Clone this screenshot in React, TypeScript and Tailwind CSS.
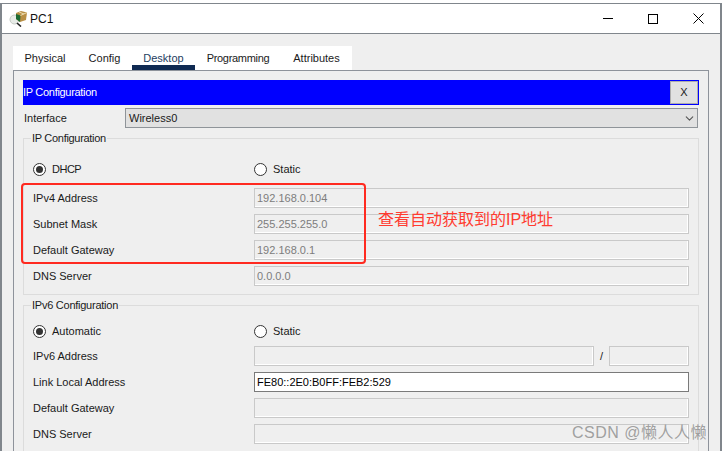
import { ChevronDown } from 'lucide-react'

const tabs = [
  { name: 'Physical', width: 'w-[64px]', extra: '' },
  { name: 'Config', width: 'w-[55px]', extra: '' },
  { name: 'Desktop', width: 'w-[63px]', extra: 'border-b-[5px] border-[#0f2a52] text-[#24405f] pt-[5px]' },
  { name: 'Programming', width: 'w-[86px]', extra: 'tracking-[-0.3px]' },
  { name: 'Attributes', width: 'w-[71px]', extra: '' },
]

function PcIcon() {
  return (
    <svg width="18" height="17" viewBox="0 0 18 17" className="shrink-0">
      <circle cx="5.5" cy="9.5" r="4.5" fill="#e8ece8" stroke="#c3c9c3" />
      <path d="M8 13 L12 16.5" stroke="#222" strokeWidth="1.6" />
      <path d="M7 3 L12 1 L18 2.5 L17 10 L11 12 L7 9 Z" fill="#b98f45" />
      <path d="M7 4 L11.5 5.5 L11 12 L7 9 Z" fill="#1c6b33" />
      <path d="M11.5 5.5 L18 2.5 M10 2 L15 4" stroke="#ecdcae" strokeWidth="1" />
    </svg>
  )
}

function Radio({ checked, label, labelClass = '' }: { checked?: boolean; label: string; labelClass?: string }) {
  return (
    <div className="flex items-center gap-[6px]">
      <span className="w-[13px] h-[13px] rounded-full border border-[#333] bg-white flex items-center justify-center">
        {checked && <span className="w-[7px] h-[7px] rounded-full bg-[#333]" />}
      </span>
      <span className={labelClass}>{label}</span>
    </div>
  )
}

function Field({ value = '', active, className = 'flex-1' }: { value?: string; active?: boolean; className?: string }) {
  return (
    <input
      readOnly
      value={value}
      className={`${className} min-w-0 h-[20px] px-[2px] text-[11px] outline-none border ${
        active
          ? 'bg-white border-[#7a7a7a] text-black'
          : 'bg-[#efefef] border-[#c9c9c9] text-[#7d7d7d] shadow-[inset_-1px_-1px_0_#fff]'
      }`}
    />
  )
}

function Row({ label, children }: { label: string; children: React.ReactNode }) {
  return (
    <div className="flex items-center h-[20px]">
      <span className="w-[221px] shrink-0">{label}</span>
      <div className="flex-1 flex items-center">{children}</div>
    </div>
  )
}

export default function App() {
  return (
    <div className="relative w-[724px] h-[451px] overflow-hidden bg-white pt-[3px] text-[11px] text-[#1a1a1a] font-['Liberation_Sans',Arial,sans-serif]">
      <div className="w-[722px] h-[448px] border-t border-r-2 border-l-2 border-[#80868c] bg-[#efefef] overflow-hidden">
        <div className="h-[30px] bg-white border-b border-[#80868c] flex items-center pl-[7px]">
          <PcIcon />
          <span className="ml-[3px] text-[12px] text-[#111]">PC1</span>
          <div className="ml-auto flex items-center pr-[16px] gap-[35px]">
            <span className="w-[10px] h-px bg-black" />
            <span className="w-[10px] h-[10px] border border-black" />
            <svg width="11" height="11" viewBox="0 0 11 11">
              <path d="M0.5 0.5 L10.5 10.5 M10.5 0.5 L0.5 10.5" stroke="black" fill="none" />
            </svg>
          </div>
        </div>

        <div className="pl-[11px] pt-[12px]">
          <div className="flex w-[339px] h-[24px] bg-white">
            {tabs.map((tab) => (
              <div key={tab.name} className={`${tab.width} flex items-center justify-center ${tab.extra}`}>
                {tab.name}
              </div>
            ))}
          </div>

          <div className="w-[696px] h-[400px] border border-[#8e939b] p-[9px]">
            <div className="h-[25px] bg-[#0000ff] flex items-center justify-between text-white pr-px">
              <span className="tracking-[-0.3px]">IP Configuration</span>
              <button className="w-[28px] h-[23px] bg-[#e1e1e1] border border-[#adadad] text-[#222] text-[11px]">
                X
              </button>
            </div>

            <div className="flex items-center h-[20px] mt-[3px] mr-px">
              <span className="w-[102px] pl-px shrink-0">Interface</span>
              <div className="flex-1 h-[20px] bg-[#e1e1e1] border border-[#8f9499] flex items-center justify-between pl-[3px] pr-px">
                <span>Wireless0</span>
                <ChevronDown size={13} className="text-[#555]" />
              </div>
            </div>

            <fieldset className="mt-[3px] border border-[#dcdcdc] pl-[9px] pr-[9px] pb-[8px] pt-[14px] flex flex-col gap-[6px]">
              <legend className="ml-[-2px] px-px h-[14px] leading-[14px] tracking-[-0.3px]">IP Configuration</legend>
              <div className="flex items-center h-[20px] mb-[3px]">
                <div className="w-[221px] shrink-0">
                  <Radio checked label="DHCP" labelClass="tracking-[-0.5px]" />
                </div>
                <Radio label="Static" />
              </div>
              <Row label="IPv4 Address">
                <Field value="192.168.0.104" />
              </Row>
              <Row label="Subnet Mask">
                <Field value="255.255.255.0" />
              </Row>
              <Row label="Default Gateway">
                <Field value="192.168.0.1" />
              </Row>
              <Row label="DNS Server">
                <Field value="0.0.0.0" />
              </Row>
            </fieldset>

            <fieldset className="mt-[3px] border border-[#dcdcdc] pl-[9px] pr-[9px] pb-[8px] pt-[9px] flex flex-col gap-[6px]">
              <legend className="ml-[-2px] px-px h-[14px] leading-[14px] tracking-[-0.25px]">IPv6 Configuration</legend>
              <div className="flex items-center h-[20px] mb-[-1px]">
                <div className="w-[221px] shrink-0">
                  <Radio checked label="Automatic" />
                </div>
                <Radio label="Static" />
              </div>
              <Row label="IPv6 Address">
                <Field />
                <span className="w-[15px] text-center shrink-0">/</span>
                <Field className="w-[80px] shrink-0" />
              </Row>
              <Row label="Link Local Address">
                <Field value="FE80::2E0:B0FF:FEB2:529" active />
              </Row>
              <Row label="Default Gateway">
                <Field />
              </Row>
              <Row label="DNS Server">
                <Field />
              </Row>
            </fieldset>
          </div>
        </div>
      </div>

      {/* red annotation drawn over the screenshot */}
      <div className="absolute left-[21px] top-[183px] w-[345px] h-[81px] rounded-[4px] border-[2.5px] border-[#ff2a20]" />
      <span className="absolute left-[378px] top-[210px] text-[16px] leading-[20px] text-[#ff3b30] font-['Liberation_Sans','Noto_Sans_CJK_SC',sans-serif]">
        查看自动获取到的IP地址
      </span>
      <span className="absolute left-[572px] top-[423px] text-[16px] leading-[20px] tracking-[0.5px] whitespace-nowrap text-[#8a8a8a]/80 font-['Liberation_Sans','Noto_Sans_CJK_SC',sans-serif]">
        CSDN @懒人人懒
      </span>
    </div>
  )
}
